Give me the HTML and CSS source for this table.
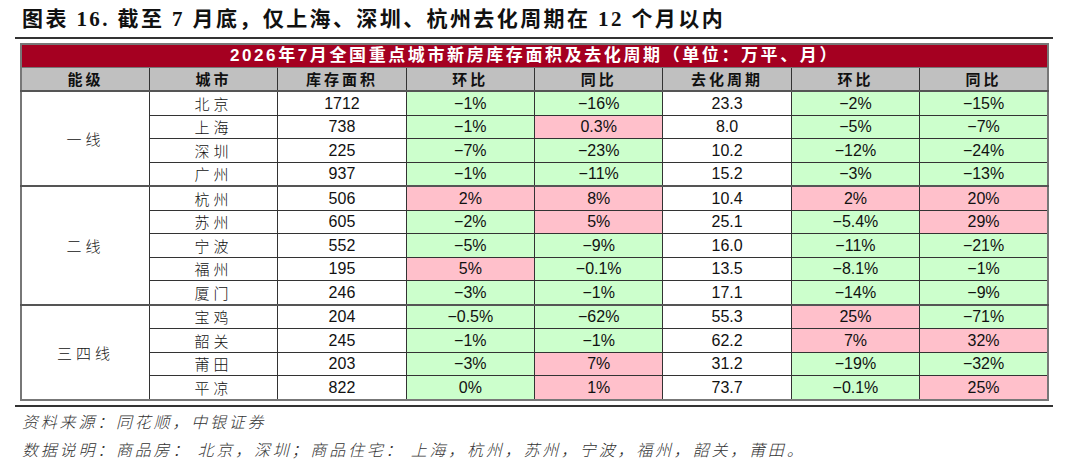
FILE: index.html
```html
<!DOCTYPE html>
<html lang="zh-CN">
<head>
<meta charset="utf-8">
<title>库存面积及去化周期</title>
<link rel="stylesheet" href="styles.css">
</head>
<body>
<div class="page">
  <h1 class="title">图表 16. 截至 7 月底，仅上海、深圳、杭州去化周期在 12 个月以内</h1>
  <div class="rule"></div>
  <table class="data">
    <colgroup>
      <col><col><col><col><col><col><col><col>
    </colgroup>
    <thead>
      <tr class="cap"><th colspan="8">2026年7月全国重点城市新房库存面积及去化周期（单位：万平、月）</th></tr>
      <tr class="head"><th>能级</th><th>城市</th><th>库存面积</th><th>环比</th><th>同比</th><th>去化周期</th><th>环比</th><th>同比</th></tr>
    </thead>
    <tbody class="grp">
      <tr><td class="tier" rowspan="4">一线</td><td class="city">北京</td><td>1712</td><td class="g">−1%</td><td class="g">−16%</td><td>23.3</td><td class="g">−2%</td><td class="g">−15%</td></tr>
      <tr><td class="city">上海</td><td>738</td><td class="g">−1%</td><td class="p">0.3%</td><td>8.0</td><td class="g">−5%</td><td class="g">−7%</td></tr>
      <tr><td class="city">深圳</td><td>225</td><td class="g">−7%</td><td class="g">−23%</td><td>10.2</td><td class="g">−12%</td><td class="g">−24%</td></tr>
      <tr><td class="city">广州</td><td>937</td><td class="g">−1%</td><td class="g">−11%</td><td>15.2</td><td class="g">−3%</td><td class="g">−13%</td></tr>
    </tbody>
    <tbody class="grp">
      <tr><td class="tier" rowspan="5">二线</td><td class="city">杭州</td><td>506</td><td class="p">2%</td><td class="p">8%</td><td>10.4</td><td class="p">2%</td><td class="p">20%</td></tr>
      <tr><td class="city">苏州</td><td>605</td><td class="g">−2%</td><td class="p">5%</td><td>25.1</td><td class="g">−5.4%</td><td class="p">29%</td></tr>
      <tr><td class="city">宁波</td><td>552</td><td class="g">−5%</td><td class="g">−9%</td><td>16.0</td><td class="g">−11%</td><td class="g">−21%</td></tr>
      <tr><td class="city">福州</td><td>195</td><td class="p">5%</td><td class="g">−0.1%</td><td>13.5</td><td class="g">−8.1%</td><td class="g">−1%</td></tr>
      <tr><td class="city">厦门</td><td>246</td><td class="g">−3%</td><td class="g">−1%</td><td>17.1</td><td class="g">−14%</td><td class="g">−9%</td></tr>
    </tbody>
    <tbody class="grp">
      <tr><td class="tier" rowspan="4">三四线</td><td class="city">宝鸡</td><td>204</td><td class="g">−0.5%</td><td class="g">−62%</td><td>55.3</td><td class="p">25%</td><td class="g">−71%</td></tr>
      <tr><td class="city">韶关</td><td>245</td><td class="g">−1%</td><td class="g">−1%</td><td>62.2</td><td class="p">7%</td><td class="p">32%</td></tr>
      <tr><td class="city">莆田</td><td>203</td><td class="g">−3%</td><td class="p">7%</td><td>31.2</td><td class="g">−19%</td><td class="g">−32%</td></tr>
      <tr><td class="city">平凉</td><td>822</td><td class="g">0%</td><td class="p">1%</td><td>73.7</td><td class="g">−0.1%</td><td class="p">25%</td></tr>
    </tbody>
  </table>
  <div class="rule bottom"></div>
  <p class="note">资料来源：同花顺，中银证券</p>
  <p class="note">数据说明：商品房： 北京，深圳；商品住宅： 上海，杭州，苏州，宁波，福州，韶关，莆田。</p>
</div>
</body>
</html>
```
FILE: styles.css
```css
html, body {
  margin: 0;
  padding: 0;
  background: #ffffff;
}

.page {
  width: 1080px;
  height: 474px;
  overflow: hidden;
  font-family: "Liberation Sans", "Noto Sans CJK SC", sans-serif;
  color: #000;
}

.title {
  margin: 0;
  padding: 6px 0 0 22px;
  height: 29px;
  font-family: "Liberation Serif", "Noto Sans CJK SC", serif;
  font-size: 21px;
  line-height: 27px;
  font-weight: bold;
  letter-spacing: 2.4px;
  color: #111;
  white-space: nowrap;
}

.rule {
  margin: 2px 0 0 15px;
  width: 1038px;
  height: 2px;
  background: #333;
}

.rule.bottom {
  margin-top: 4px;
}

.data {
  margin: 4px 0 0 20px;
  width: 1029px;
  border-collapse: collapse;
  table-layout: fixed;
  border: 2px solid #777;
}

.data th,
.data td {
  padding: 0;
  text-align: center;
  vertical-align: middle;
  border: 1px solid #333;
  white-space: nowrap;
  overflow: hidden;
}

.cap th {
  height: 22px;
  line-height: 20px;
  background: #a50021;
  color: #fff;
  font-family: "Liberation Sans", "Noto Sans CJK SC", sans-serif;
  font-size: 17px;
  font-weight: bold;
  letter-spacing: 2.6px;
  border-color: #777;
}

.head th {
  height: 22px;
  line-height: 20px;
  background: #c0c0c0;
  font-family: "Noto Sans CJK SC", sans-serif;
  font-size: 15px;
  font-weight: bold;
  letter-spacing: 3px;
  color: #111;
}

.data td {
  height: 22.5px;
  font-size: 16px;
  line-height: 19px;
  color: #111;
}

.grp {
  border-top: 2px solid #555;
}

.data .tier,
.data .city {
  font-family: "Noto Sans CJK SC", sans-serif;
  font-size: 15px;
  font-weight: 300;
  letter-spacing: 4px;
}

.data .g {
  background: #ccffcc;
}

.data .p {
  background: #ffc0cb;
}

.note {
  margin: 0;
  padding-left: 22px;
  font-family: "Noto Sans CJK SC", sans-serif;
  font-style: italic;
  font-weight: 300;
  font-size: 16px;
  letter-spacing: 2.8px;
  line-height: 28px;
  color: #333;
  white-space: nowrap;
}
```
